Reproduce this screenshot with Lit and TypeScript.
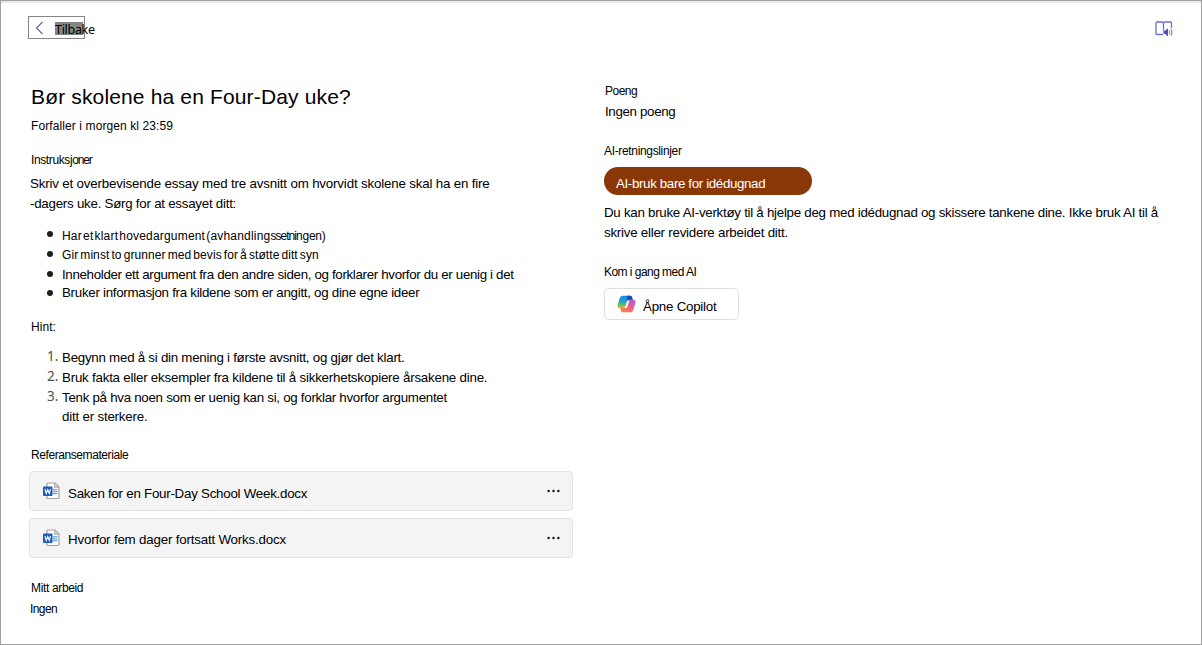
import { LitElement, html, css, svg } from "lit";
import { customElement, property } from "lit/decorators.js";

const wordIcon = svg`
  <path d="M5 1h7l4 4v10.500a1 1 0 0 1-1 1H5a1 1 0 0 1-1-1V2a1 1 0 0 1 1-1z" fill="#fdfdfd" stroke="#a2a2a2" stroke-width="1.200"/>
  <path d="M11.800 1.200v4h4" fill="none" stroke="#a2a2a2" stroke-width="1.200"/>
  <path d="M10 7.700h4.500M10 9.700h4.500M10 11.700h4.500" stroke="#6aa7e8" stroke-width="1.300"/>
  <rect x="0" y="4.500" width="9.500" height="9.500" rx="1" fill="#2059bd"/>
  <path d="M2 7l1.200 4.500L4.750 7.600l1.500 3.900 1.200-4.500" fill="none" stroke="#fff" stroke-width="1.100"/>`;

@customElement("file-card")
export class FileCard extends LitElement {
  @property() name = "";
  static styles = css`
    :host { display: flex; box-sizing: border-box; height: 40px; align-items: center; border: 1px solid #e3e3e3;
      border-radius: 4px; background: #f4f4f4; padding: 0 12px 0 13px; white-space: nowrap; }
    .icon { width: 18px; height: 18px; flex: none; margin-bottom: 1px; }
    .name { flex: 1; padding: var(--name-top, 5px) 0 0 7px; line-height: 20px; letter-spacing: var(--name-spacing, -0.25px); }
    .more { width: 13px; height: 4px; flex: none; margin-bottom: 1px; }
  `;
  render() {
    return html`
      <svg class="icon" viewBox="0 0 18 18">${wordIcon}</svg>
      <span class="name">${this.name}</span>
      <svg class="more" viewBox="0 0 13 4"><g fill="#1c1c1c"><circle cx="1.6" cy="2" r="1.25"/><circle cx="6.5" cy="2" r="1.25"/><circle cx="11.4" cy="2" r="1.25"/></g></svg>`;
  }
}

@customElement("app-root")
export class AppRoot extends LitElement {
  static styles = css`
    :host { display: block; font-family: "Liberation Sans", Arial, sans-serif; font-size: 13.33px; line-height: 20px; color: #000; }
    .page { box-sizing: border-box; width: 1202px; height: 645px; border: 1px solid #a0a0a0; background: #fff; overflow: hidden; }
    .strip { height: 2px; background: #e9e9e9; }
    .bar { display: flex; justify-content: space-between; padding: 13px 27px 0 27px; height: 24px; }
    .back { box-sizing: border-box; width: 57px; height: 23px; border: 1px solid #858585; display: flex; padding: 4px 0 0 6px; white-space: nowrap; background: #fff; }
    .chev { width: 9px; height: 14px; flex: none; }
    .sel { flex: none; width: 28px; height: 13px; margin: 1px 0 0 11px; background: #858585; font: 12.5px/14px "Noto Sans", sans-serif; letter-spacing: -0.3px; }
    .sel span { display: block; padding-top: 1px; }
    .reader { width: 20px; height: 20px; margin-top: 4px; }
    .cols { display: grid; grid-template-columns: 544px 1fr; column-gap: 30px; padding-left: 28px; }
    .left { padding-top: 43px; }
    .right { padding-top: 41px; padding-left: 1px; }
    .line { white-space: nowrap; height: 20px; }
    h1, ul, ol { margin: 0; padding: 0; font-weight: 400; font-size: inherit; list-style: none; }
    h1.title { font-size: 21px; line-height: 28px; padding-left: 2px; letter-spacing: 0.15px; white-space: nowrap; }
    .small { font-size: 12px; white-space: nowrap; padding-left: 2px; }
    .due { margin-top: 5px; letter-spacing: 0.1px; }
    .inst { margin-top: 14px; letter-spacing: -0.38px; }
    .inst .tight { letter-spacing: -1.2px; }
    .body { margin-top: 4px; padding-left: 1px; }
    .b1 { letter-spacing: -0.172px; }
    .b2 { letter-spacing: -0.25px; }
    .bullets { margin-top: 12px; }
    .bullets li, .steps li { display: flex; white-space: nowrap; }
    .dot { width: 6px; height: 6px; border-radius: 50%; background: #1f1f1f; margin: 5px 9px 0 18px; flex: none; }
    .i1 { font-size: 12px; height: 19px; letter-spacing: 0.19px; word-spacing: -2.4px; }
    .i1 .tight { letter-spacing: -0.95px; }
    .i1 .end { letter-spacing: -0.25px; }
    .i2 { font-size: 12px; height: 20px; letter-spacing: 0.08px; word-spacing: -1.35px; }
    .i2 .dot, .i3 .dot { margin-top: 6px; }
    .i3 { letter-spacing: -0.334px; height: 18px; }
    .i4 { letter-spacing: -0.285px; height: 19px; }
    .i4 .dot { margin-top: 7px; }
    .hint { margin-top: 15px; letter-spacing: 0.05px; }
    .steps { margin-top: 11px; }
    .num { width: 15px; padding-left: 18px; flex: none; color: #505050; font: 13.5px/20px "Noto Sans", sans-serif; letter-spacing: 0; margin-top: -2px; height: 20px; }
    .s1 { letter-spacing: -0.255px; }
    .s2 { letter-spacing: -0.22px; }
    .s3 { letter-spacing: -0.282px; }
    .cont { line-height: 18px; letter-spacing: -0.2px; }
    .ref { margin-top: 19px; letter-spacing: -0.42px; }
    .files { margin-top: 6px; display: grid; gap: 7px; }
    .files .second { --name-spacing: -0.19px; --name-top: 3px; }
    .work { margin-top: 20px; letter-spacing: -0.35px; }
    .none { margin-top: 1px; padding-left: 1px; letter-spacing: -0.6px; }
    .pts { padding-left: 1px; letter-spacing: -0.5px; }
    .nopts { padding: 1px 0 0 1px; letter-spacing: -0.34px; }
    .guide { margin-top: 19px; padding-left: 0; letter-spacing: -0.34px; }
    .pill { box-sizing: border-box; width: 208px; height: 28px; border-radius: 14px; background: #8a3707; color: #fff; margin-top: 6px; padding: 7px 0 0 12px; white-space: nowrap; letter-spacing: -0.36px; }
    .desc { margin-top: 8px; white-space: nowrap; }
    .d1 { letter-spacing: -0.272px; }
    .d2 { letter-spacing: -0.24px; }
    .start { margin-top: 19px; padding-left: 0; letter-spacing: -0.54px; }
    .copilot { box-sizing: border-box; width: 135px; height: 32px; border: 1px solid #dedede; border-radius: 5px; margin-top: 6px; padding-left: 12px; display: flex; align-items: center; white-space: nowrap; letter-spacing: -0.24px; }
    .copilot svg { width: 19px; height: 18px; margin-bottom: 1px; }
    .copilot span { padding: 6px 0 0 7px; line-height: 20px; }
  `;

  render() {
    return html`
      <div class="page">
        <div class="strip"></div>
        <div class="bar">
          <div class="back">
            <svg class="chev" viewBox="0 0 9 14"><path d="M7.5 1L1.5 7l6 6" fill="none" stroke="#6264b0" stroke-width="1.2"/></svg>
            <div class="sel"><span>Tilbake</span></div>
          </div>
          <svg class="reader" viewBox="0 0 20 20" fill="none" stroke="#6a6fd0" stroke-width="1.3">
            <path d="M9 14.500H3.200A1.200 1.200 0 0 1 2 13.300V3.200A1.200 1.200 0 0 1 3.200 2H8a1.500 1.500 0 0 1 1.500 1.500V10.500M9.500 3.500A1.500 1.500 0 0 1 11 2h5.300a1.200 1.200 0 0 1 1.200 1.200V8"/>
            <path d="M9.300 10.800h1.700l3-2.600v8.200l-3-2.600H9.300z" fill="#4b50bd" stroke="none"/>
            <path d="M15.200 10.500q1.300 1.800 0 3.700M17 9q2.300 3.300 0 6.700" stroke-width="1"/>
          </svg>
        </div>
        <div class="cols">
          <div class="left">
            <h1 class="title">Bør skolene ha en Four-Day uke?</h1>
            <div class="small due">Forfaller i morgen kl 23:59</div>
            <div class="small inst">Instruksj<span class="tight">oner</span></div>
            <div class="body">
              <div class="line b1">Skriv et overbevisende essay med tre avsnitt om hvorvidt skolene skal ha en fire</div>
              <div class="line b2">-dagers uke. Sørg for at essayet ditt:</div>
            </div>
            <ul class="bullets">
              <li class="i1"><i class="dot"></i><span>Har et klart hovedargument (avhandling<span class="tight">ssetni</span><span class="end">ngen)</span></span></li>
              <li class="i2"><i class="dot"></i><span>Gir minst to grunner med bevis for å støtte ditt syn</span></li>
              <li class="i3"><i class="dot"></i><span>Inneholder ett argument fra den andre siden, og forklarer hvorfor du er uenig i det</span></li>
              <li class="i4"><i class="dot"></i><span>Bruker informasjon fra kildene som er angitt, og dine egne ideer</span></li>
            </ul>
            <div class="small hint">Hint:</div>
            <ol class="steps">
              <li class="s1"><span class="num">1.</span><span>Begynn med å si din mening i første avsnitt, og gjør det klart.</span></li>
              <li class="s2"><span class="num">2.</span><span>Bruk fakta eller eksempler fra kildene til å sikkerhetskopiere årsakene dine.</span></li>
              <li class="s3"><span class="num">3.</span><div><div>Tenk på hva noen som er uenig kan si, og forklar hvorfor argumentet</div><div class="cont">ditt er sterkere.</div></div></li>
            </ol>
            <div class="small ref">Referansemateriale</div>
            <div class="files">
              <file-card name="Saken for en Four-Day School Week.docx"></file-card>
              <file-card class="second" name="Hvorfor fem dager fortsatt Works.docx"></file-card>
            </div>
            <div class="small work">Mitt arbeid</div>
            <div class="small none">Ingen</div>
          </div>
          <div class="right">
            <div class="small pts">Poeng</div>
            <div class="nopts">Ingen poeng</div>
            <div class="small guide">AI-retningslinjer</div>
            <div class="pill">AI-bruk bare for idédugnad</div>
            <div class="desc">
              <div class="d1">Du kan bruke AI-verktøy til å hjelpe deg med idédugnad og skissere tankene dine. Ikke bruk AI til å</div>
              <div class="d2">skrive eller revidere arbeidet ditt.</div>
            </div>
            <div class="small start">Kom i gang med AI</div>
            <div class="copilot">
              <svg viewBox="0 0 19 18">
                <defs>
                  <linearGradient id="ca" x1="0.3" y1="0" x2="0.2" y2="1"><stop offset="0" stop-color="#1b86e8"/><stop offset=".45" stop-color="#22a6c8"/><stop offset=".75" stop-color="#6cbf55"/><stop offset="1" stop-color="#e8c62a"/></linearGradient>
                  <linearGradient id="cb" x1="0.9" y1="0" x2="0.3" y2="1"><stop offset="0" stop-color="#a45be8"/><stop offset=".5" stop-color="#ee5a8a"/><stop offset="1" stop-color="#fb8640"/></linearGradient>
                </defs>
                <path d="M6 .8h7.200c1.100 0 1.600.8 1.900 1.800L15.800 5h-3.500c-1.300 0-2 .6-2.400 2L8.300 11.800c-.3 1-1 1.500-2 1.500H2.800C.8 13.300.1 11.800.7 9.900L2.600 3.600C3.200 1.700 4.300.8 6 .8z" fill="url(#ca)"/>
                <path d="M10 .8h3.200c1.100 0 1.600.8 1.900 1.800L15.800 5h-3.500c-1 0-1.500.3-2 1z" fill="#1849b5"/>
                <path d="M13 17.200H5.800c-1.100 0-1.600-.8-1.900-1.800L3.200 13h3.500c1.300 0 2-.6 2.400-2l1.600-4.800c.3-1 1-1.500 2-1.500h3.500c2 0 2.700 1.500 2.100 3.400l-1.900 6.300c-.6 1.900-1.700 2.800-3.400 2.800z" fill="url(#cb)"/>
                <path d="M10.800 5.500h2c-.6.500-.8 1.100-1.100 2l-1.200 3.900c-.3.900-.7 1.400-1.300 1.700H7c1-.3 1.400-1 1.700-2z" fill="#fff"/>
              </svg>
              <span>Åpne Copilot</span>
            </div>
          </div>
        </div>
      </div>`;
  }
}
